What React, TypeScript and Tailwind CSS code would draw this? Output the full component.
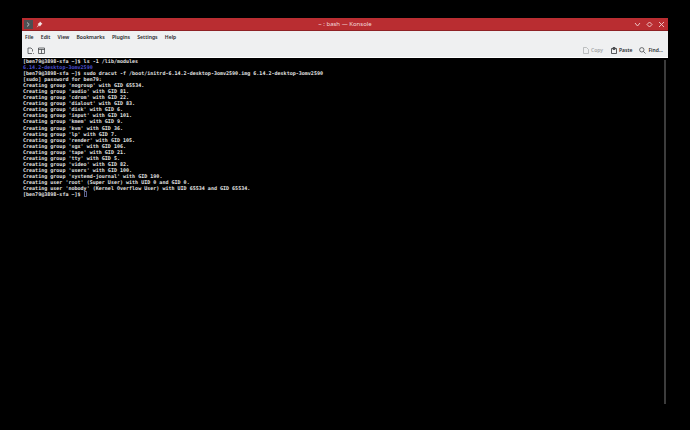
const menus = ["File", "Edit", "View", "Bookmarks", "Plugins", "Settings", "Help"];

const groups = [
  "'nogroup' with GID 65534.",
  "'audio' with GID 81.",
  "'cdrom' with GID 22.",
  "'dialout' with GID 83.",
  "'disk' with GID 6.",
  "'input' with GID 101.",
  "'kmem' with GID 9.",
  "'kvm' with GID 36.",
  "'lp' with GID 7.",
  "'render' with GID 105.",
  "'sgx' with GID 106.",
  "'tape' with GID 21.",
  "'tty' with GID 5.",
  "'video' with GID 82.",
  "'users' with GID 100.",
  "'systemd-journal' with GID 190.",
];

export default function App() {
  return (
    <div className="w-[690px] h-[430px] overflow-hidden bg-black pt-[18px] pl-[22px] antialiased font-['Noto_Sans',sans-serif]">
      <div className="w-[646px] flex flex-col">
        {/* title bar */}
        <div className="h-[13px] bg-[#b92d31] border-b border-[#8f2226] flex items-center justify-between relative">
          <div className="flex items-center gap-[3px] pl-[2px]">
            <div className="w-[9px] h-[9px] bg-[#4d4f52] flex items-center justify-center">
              <svg width="5" height="5" viewBox="0 0 5 5" fill="none" stroke="#d8dadc" strokeWidth="0.8">
                <path d="M1 .5 3.2 2.5 1 4.5" />
              </svg>
            </div>
            <svg width="7" height="7" viewBox="0 0 7 7" fill="#f4e6e6">
              <path d="M4 .5 6.5 3 5.4 3.4 4 5.4 1.6 3 3.6 1.6ZM2.2 4 .6 6.4 3 4.8Z" />
            </svg>
          </div>
          <span className="absolute left-0 w-[646px] text-center text-[6px] leading-[12px] text-[#f3dcdc]">~ : bash — Konsole</span>
          <div className="flex items-center gap-[5px] pr-[3px]">
            <svg width="7" height="7" viewBox="0 0 7 7" fill="none" stroke="#f2d3d3" strokeWidth="0.9">
              <path d="M1 2 3.5 5 6 2" />
            </svg>
            <svg width="7" height="7" viewBox="0 0 7 7" fill="none" stroke="#f2d3d3" strokeWidth="0.9">
              <path d="M3.5 1 6 3.5 3.5 6 1 3.5Z" />
            </svg>
            <svg width="7" height="7" viewBox="0 0 7 7" fill="none" stroke="#f2d3d3" strokeWidth="0.9">
              <path d="M1 1 6 6M6 1 1 6" />
            </svg>
          </div>
        </div>

        {/* menu bar */}
        <div className="h-[13px] bg-[#eff0f1] flex items-center gap-[7.2px] pl-[3px] text-[5.1px] font-semibold text-[#26292c]">
          {menus.map((m) => (
            <span key={m}>{m}</span>
          ))}
        </div>

        {/* toolbar */}
        <div className="h-[14px] bg-[#eff0f1] border-b border-white flex items-center justify-between pl-[5px] pr-[5px] text-[5px] font-semibold text-[#26292c]">
          <div className="flex items-center gap-[4px]">
            <svg width="7" height="8" viewBox="0 0 7 8" fill="none" stroke="#33363a" strokeWidth="0.7">
              <path d="M5 6.5H1V1H4L5.5 2.5V4.5M6 6.5H6.8" />
            </svg>
            <svg width="7" height="7" viewBox="0 0 7 7" fill="none" stroke="#33363a" strokeWidth="0.7">
              <path d="M.5 1H6.500V6.500H.5ZM.5 2.500H6.500M3.500 2.500V6.500" />
            </svg>
          </div>
          <div className="flex items-center">
            <svg width="6" height="7" viewBox="0 0 6 7" fill="none" stroke="#a7a9ab" strokeWidth="0.7">
              <path d="M.5.5H3.500L5.500 2.500V6.500H.5Z" />
            </svg>
            <span className="ml-[2px] text-[#a4a6a8]">Copy</span>
            <svg className="ml-[8px]" width="6" height="7" viewBox="0 0 6 7" fill="none" stroke="#33363a" strokeWidth="0.8">
              <path d="M.5 1.500H5.500V6.500H.5ZM2 .5H4V2.500H2Z" />
            </svg>
            <span className="ml-[2px]">Paste</span>
            <svg className="ml-[7px]" width="7" height="7" viewBox="0 0 7 7" fill="none" stroke="#33363a" strokeWidth="0.7">
              <circle cx="2.800" cy="2.800" r="2.200" />
              <path d="M4.400 4.400 6.500 6.500" />
            </svg>
            <span className="ml-[2px]">Find...</span>
          </div>
        </div>

        {/* terminal */}
        <div className="h-[347px] bg-black flex justify-between pl-[1px] pr-[2px] font-['DejaVu_Sans_Mono',monospace] font-bold text-[5px] leading-[6.05px] tracking-[0.02px] text-[#e4e4e4] whitespace-pre">
          <div className="flex flex-col">
            <div>[ben79@3898-sfa ~]$ ls -1 /lib/modules</div>
            <div className="text-[#4a4fd0]">6.14.2-desktop-3omv2590</div>
            <div>[ben79@3898-sfa ~]$ sudo dracut -f /boot/initrd-6.14.2-desktop-3omv2590.img 6.14.2-desktop-3omv2590</div>
            <div>[sudo] password for ben79:</div>
            {groups.map((g) => (
              <div key={g}>Creating group {g}</div>
            ))}
            <div>Creating user 'root' (Super User) with UID 0 and GID 0.</div>
            <div>Creating user 'nobody' (Kernel Overflow User) with UID 65534 and GID 65534.</div>
            <div className="flex items-center">
              <span>[ben79@3898-sfa ~]$ </span>
              <span className="w-[3px] h-[6px] border border-[#5a5f8a]" />
            </div>
          </div>
          <div className="w-[2px] h-[344px] mt-[2px] bg-[#3c3c3c]" />
        </div>
      </div>
    </div>
  );
}
